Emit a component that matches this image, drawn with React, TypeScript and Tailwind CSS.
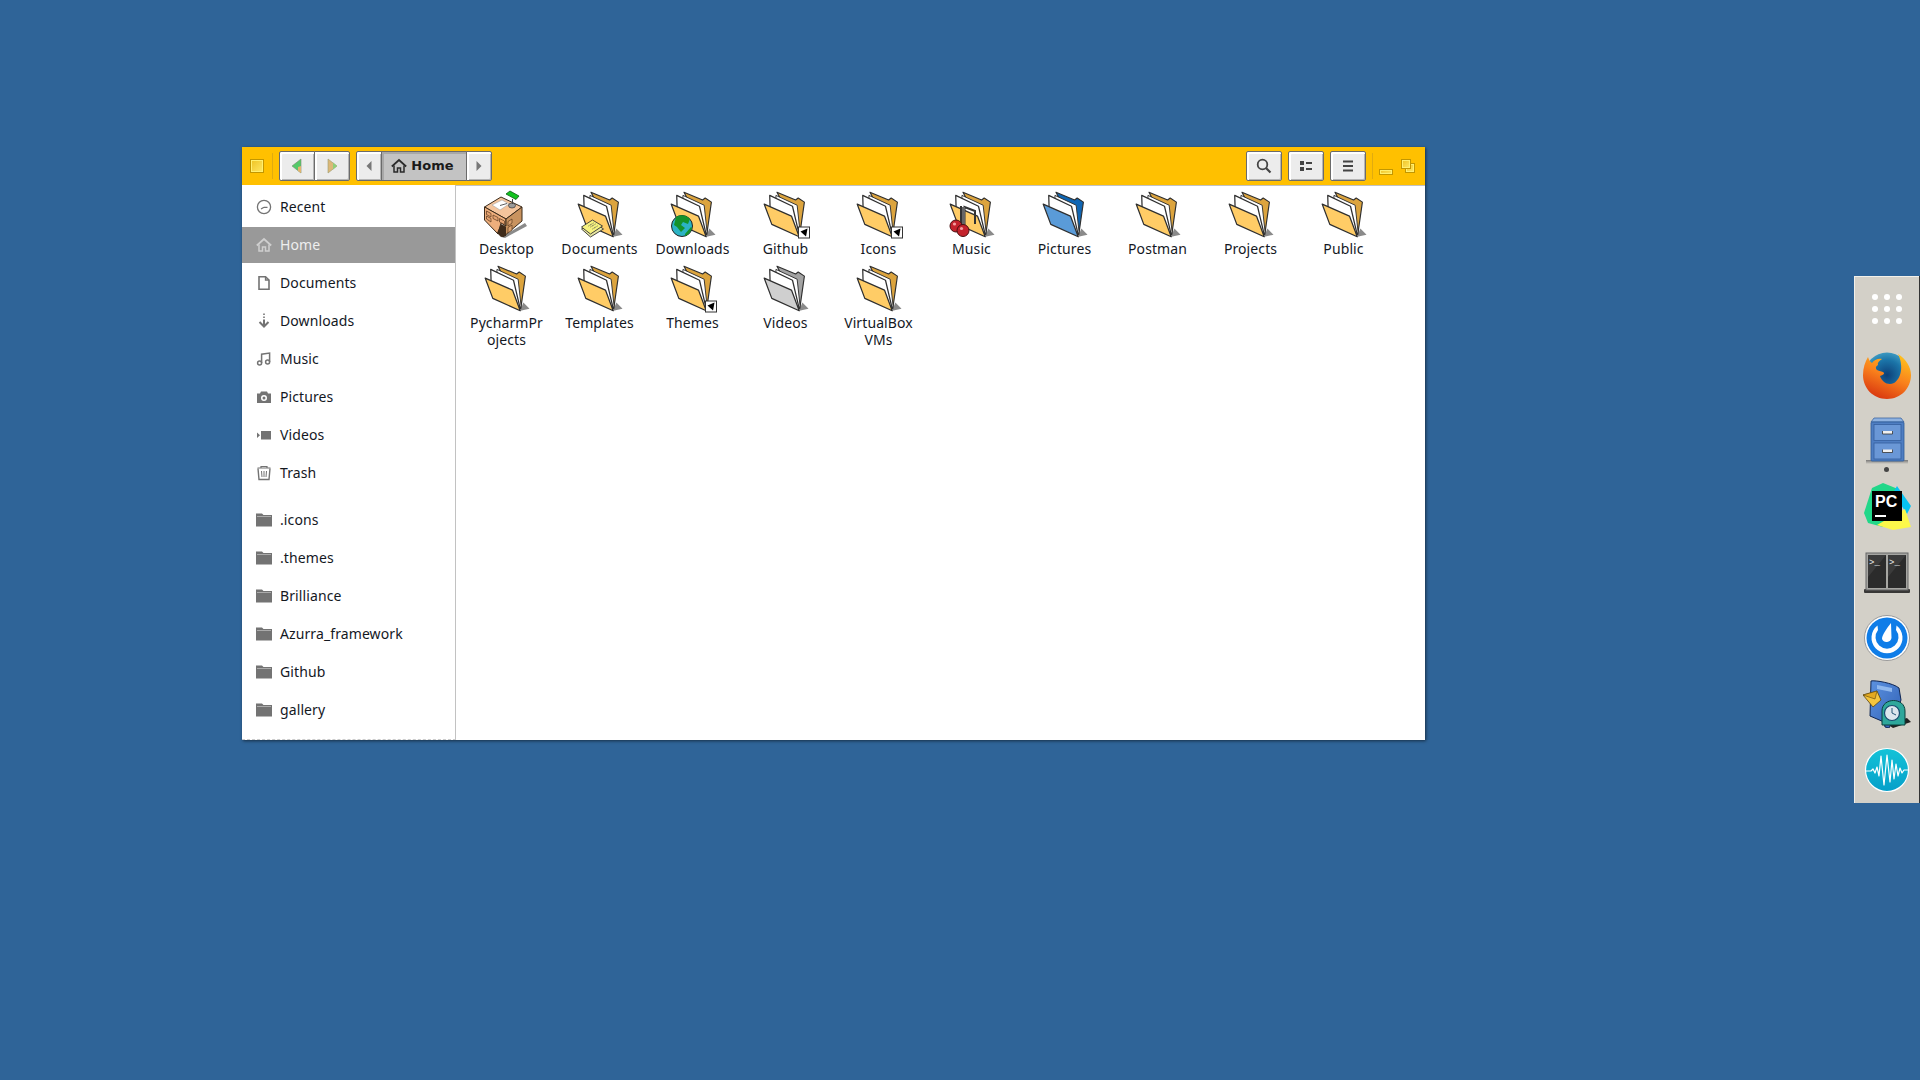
import React from "react";

const Ic = ({ children }: { children: React.ReactNode }) => (
  <svg width="16" height="16" viewBox="0 0 16 16" className="shrink-0">{children}</svg>
);

function SideIcon({ name, color }: { name: string; color: string }) {
  const s = { stroke: color, fill: "none", strokeWidth: 1.3 };
  switch (name) {
    case "recent":
      return <Ic><circle cx="8" cy="8" r="6.6" {...s} /><path d="M8 8.3H11.5M8 8.3 5 10" {...s} /></Ic>;
    case "home":
      return <Ic><path d="M.8 8.5 8 2l7.2 6.5" {...s} strokeWidth={1.7} /><path d="M3 7.5V14H6.5V10H9.5V14H13V7.5" {...s} strokeWidth={1.5} /></Ic>;
    case "doc":
      return <Ic><path d="M3 1.7H9.5L13 5V14.3H3Z" {...s} strokeWidth={1.6} /><path d="M9.5 1.7V5H13" {...s} /></Ic>;
    case "down":
      return <Ic><path d="M8 .5v1.5M8 3.5V5" {...s} strokeWidth={1.6} /><path d="M8 6.5V13M3.5 9 8 13.5 12.5 9" {...s} strokeWidth={2} /></Ic>;
    case "music":
      return <Ic><path d="M5.6 12V3.2L13.6 2V11" {...s} strokeWidth={1.5} /><circle cx="3.6" cy="12" r="2" {...s} strokeWidth={1.5} /><circle cx="11.6" cy="11" r="2" {...s} strokeWidth={1.5} /></Ic>;
    case "pic":
      return <Ic><path fillRule="evenodd" fill={color} d="M5 2.5H11L12 4.5H15V14H1V4.5H4ZM8 6A3 3 0 1 0 8 12 3 3 0 1 0 8 6ZM8 7.5A1.5 1.5 0 1 1 8 10.5 1.5 1.5 0 1 1 8 7.5Z" /></Ic>;
    case "video":
      return <Ic><path fill={color} d="M5 4H15V12.5H5ZM1 5.5 4 8.2 1 11Z" /></Ic>;
    case "trash":
      return <Ic><path d="M1.5 3H14.5M5 3V1.5H11V3" {...s} strokeWidth={1.2} /><path d="M2 3.5 3 14.5H13L14 3.5" {...s} strokeWidth={1.4} /><path d="M5.5 6 6 12M8 6V12M10.5 6 10 12" {...s} strokeWidth={1} /></Ic>;
    default:
      return <Ic><path fill={color} d="M0 1.5H6L7.5 3H16V14.5H0Z" /><path fill="#fff" opacity=".5" d="M1 4.2H15V5H1Z" /></Ic>;
  }
}

const sidebarTop = [
  ["Recent", "recent"], ["Home", "home"], ["Documents", "doc"], ["Downloads", "down"],
  ["Music", "music"], ["Pictures", "pic"], ["Videos", "video"], ["Trash", "trash"],
];
const sidebarBottom = [".icons", ".themes", "Brilliance", "Azurra_framework", "Github", "gallery"];

function SideRow({ label, icon, active }: { label: string; icon: string; active?: boolean }) {
  return (
    <div className={`flex h-[36px] items-center gap-[8px] pl-[14px] ${active ? "bg-[#999999] text-[#eeeeee]" : "text-[#14181f]"}`}>
      <SideIcon name={icon} color={active ? "#cfcfcf" : "#737373"} />
      <span className="pb-[2px]">{label}</span>
    </div>
  );
}

function Folder({
  front = "#ffcc66", back = "#dca43e", emblem,
}: { front?: string; back?: string; emblem?: React.ReactNode }) {
  return (
    <svg width="48" height="48" viewBox="0 0 48 48" className="shrink-0 overflow-visible">
      <g transform="translate(1 0.2) scale(1.035)">
        <path d="M35 45 44 43 38 37Z" fill="#8a8a8a" />
        <path d="M13.5 2 31.5 9.5 34 7.5 40 11.5 35.5 43Z" fill={back} stroke="#2f2f2f" strokeWidth="1.1" strokeLinejoin="round" />
        <path d="M12.5 5 33 14.5 36 42 12.5 22Z" fill="#fff" stroke="#2f2f2f" strokeWidth=".9" strokeLinejoin="round" />
        <path d="M6.5 5 28.5 15.5 35 43 7 22Z" fill="#fff" stroke="#2f2f2f" strokeWidth="1.2" strokeLinejoin="round" />
        <path d="M1.2 13.5 27.5 25 35 45 8.5 33Z" fill={front} stroke="#2f2f2f" strokeWidth="1.2" strokeLinejoin="round" />
      </g>
      {emblem}
    </svg>
  );
}

const Link = () => (
  <g>
    <rect x="36.5" y="37" width="11" height="11" fill="#fff" stroke="#333" />
    <path d="M38.5 41.5 45.5 38.5 44 46.5Z" fill="#000" />
  </g>
);

const DeskIcon = () => (
  <svg width="48" height="48" viewBox="0 0 48 48" className="shrink-0">
    <path d="M18 47 42 33 44 36 22 48Z" fill="#8a8a8a" />
    <path d="M1.5 17 18 7 39 17 23 29Z" fill="#f4c49c" stroke="#3a2a1a" />
    <path d="M1.5 17 23 29V36L18 33 15 44 1.5 30Z" fill="#eeae7c" stroke="#3a2a1a" />
    <path d="M23 29 39 17V31L20 47 18 44V36L23 36Z" fill="#c9935f" stroke="#3a2a1a" />
    <path d="M18 34 23 37 23 46 18 47 14 43Z" fill="#3f2b1a" />
    <path d="M3.5 21 8 23.5V27L3.5 24.5ZM3.5 26 8 28.5V32L3.5 29ZM10 25 15 27.5V31L10 28.5ZM16.5 28.5 21.5 31V34.5L16.5 32Z" fill="#e6a472" stroke="#5a3a20" strokeWidth=".7" />
    <path d="M25 31.5 29 29V33L25 36ZM25 37.5 29 35V40L25 43Z" fill="#dca26f" stroke="#5a3a20" strokeWidth=".7" />
    <path d="M9 15 19 10 26 14 17 20Z" fill="#fff" stroke="#999" strokeWidth=".5" />
    <path d="M17 15.5 24 13.5" stroke="#333" strokeWidth=".8" />
    <ellipse cx="29" cy="15.5" rx="3.5" ry="2.5" fill="#9b9b9b" stroke="#333" strokeWidth=".7" />
    <path d="M29.5 14V9" stroke="#444" strokeWidth="1" />
    <path d="M23 4 27 1 36 6 33 9.5Z" fill="#12c31e" stroke="#0a5a10" strokeWidth=".8" />
  </svg>
);

const DocEmblem = () => (
  <g transform="translate(3.5 4)">
    <path d="M2 35 14 28 24 35 11 43Z" fill="#e8e6a0" stroke="#333" strokeWidth=".9" />
    <path d="M2 33 13 26 23 32 11 40Z" fill="#f6f27e" stroke="#333" strokeWidth=".9" />
    <path d="M9 32 14 29M11 33 16 30M13 35 18 32" stroke="#555" strokeWidth="1" strokeDasharray="1 .7" />
  </g>
);
const GlobeEmblem = () => (
  <g transform="translate(2 0)">
    <circle cx="11" cy="36" r="10.5" fill="#2bb3c4" stroke="#222" />
    <path d="M5 27C9 24 16 25 19 29L17 34 12 32 10 35 14 38 10 42 6 37 3 35Z" fill="#14922a" />
    <path d="M14 44 20 37 21 38C20 42 17 45 14 46Z" fill="#14922a" />
  </g>
);
const MusicEmblem = () => (
  <g transform="translate(1 1)">
    <path d="M12 36V15M15.5 37V16L26 20V33" stroke="#333" fill="none" strokeWidth="2" />
    <path d="M13 16h3v18h-3z" fill="#666" />
    <circle cx="7" cy="35" r="6" fill="#c4232c" stroke="#4a1010" />
    <circle cx="14" cy="39.5" r="6" fill="#c4232c" stroke="#4a1010" />
    <circle cx="5.5" cy="33" r="1.6" fill="#f3a0a0" />
    <circle cx="12.5" cy="37.5" r="1.6" fill="#f3a0a0" />
  </g>
);

const items: { label: React.ReactNode; icon: React.ReactNode }[] = [
  { label: "Desktop", icon: <DeskIcon /> },
  { label: "Documents", icon: <Folder emblem={<DocEmblem />} /> },
  { label: "Downloads", icon: <Folder emblem={<GlobeEmblem />} /> },
  { label: "Github", icon: <Folder emblem={<Link />} /> },
  { label: "Icons", icon: <Folder emblem={<Link />} /> },
  { label: "Music", icon: <Folder emblem={<MusicEmblem />} /> },
  { label: "Pictures", icon: <Folder front="#5a9bd8" back="#0f66b4" /> },
  { label: "Postman", icon: <Folder /> },
  { label: "Projects", icon: <Folder /> },
  { label: "Public", icon: <Folder /> },
  { label: <>PycharmPr<br />ojects</>, icon: <Folder /> },
  { label: "Templates", icon: <Folder /> },
  { label: "Themes", icon: <Folder emblem={<Link />} /> },
  { label: "Videos", icon: <Folder front="#cfcfcf" back="#a3a3a3" /> },
  { label: <>VirtualBox<br />VMs</>, icon: <Folder /> },
];

const btn = "flex items-center justify-center border border-[#6b6b6b] bg-[#ececec] shadow-[inset_2px_2px_0_#ffffff,inset_-1px_-1px_0_#b5b5b5]";

const Tri = ({ dir, fill, fill2 }: { dir: "l" | "r"; fill: string; fill2?: string }) => (
  <svg width="14" height="16" viewBox="0 0 14 16">
    {dir === "l"
      ? <><path d="M11 1V15L2 8Z" fill={fill} stroke="#7a8a70" strokeWidth=".6" />{fill2 && <path d="M8 9V13L11 15V8Z" fill={fill2} />}</>
      : <><path d="M3 1V15L12 8Z" fill={fill} stroke="#9a9a70" strokeWidth=".6" />{fill2 && <path d="M8 4.5V11.5L12 8Z" fill={fill2} />}</>}
  </svg>
);
const SmallTri = ({ dir }: { dir: "l" | "r" }) => (
  <svg width="8" height="12" viewBox="0 0 8 12">
    <path d={dir === "l" ? "M6.5 1V11L1.5 6Z" : "M1.5 1V11L6.5 6Z"} fill="#777" />
  </svg>
);

const YellowSquare = ({ className = "" }: { className?: string }) => (
  <span className={`block border border-[#c29600] bg-gradient-to-br from-[#eec21a] to-[#ffe860] shadow-[inset_1px_1px_0_#ffef70,inset_-1px_-1px_0_#ffef70] ${className}`} />
);

function Header() {
  return (
    <div className="flex h-[38px] items-center bg-[#ffc000] text-[#222]">
      <YellowSquare className="ml-[8px] h-[14px] w-[14px]" />
      <span className="ml-[8px] mr-[6px] h-[26px] w-px bg-[#e0ab10]" />
      <div className="flex h-[30px] w-[71px] rounded-[2px]">
        <div className={`${btn} w-[36px] rounded-l-[2px]`}><Tri dir="l" fill="#55c96a" fill2="#e3b56e" /></div>
        <div className={`${btn} -ml-px w-[36px] rounded-r-[2px]`}><Tri dir="r" fill="#dcb878" fill2="#8fcf7a" /></div>
      </div>
      <div className="ml-[6px] flex h-[30px]">
        <div className={`${btn} w-[26px] rounded-l-[2px]`}><SmallTri dir="l" /></div>
        <div className="-ml-px flex w-[86px] items-center justify-center gap-[4px] border border-[#6b6b6b] bg-[#c3c3c3] pr-[3px] shadow-[inset_2px_2px_0_#a8a8a8]">
          <SideIcon name="home" color="#2a2a2a" />
          <span className="font-['DejaVu_Sans',sans-serif] text-[13px] font-bold text-[#1a1a1a]">Home</span>
        </div>
        <div className={`${btn} -ml-px w-[26px] rounded-r-[2px]`}><SmallTri dir="r" /></div>
      </div>
      <div className="flex-1" />
      <div className="flex gap-[6px]">
        <div className={`${btn} h-[30px] w-[36px] rounded-[2px]`}>
          <svg width="16" height="16" viewBox="0 0 16 16"><circle cx="6.5" cy="6.5" r="4.8" fill="none" stroke="#444" strokeWidth="1.8" /><path d="M10 10 14.5 14.5" stroke="#444" strokeWidth="2.2" /></svg>
        </div>
        <div className={`${btn} h-[30px] w-[36px] rounded-[2px]`}>
          <svg width="14" height="14" viewBox="0 0 14 14"><path fill="#444" d="M1 2H5V6H1ZM7 3H13V5H7ZM1 8H5V12H1ZM7 9H13V11H7Z" /></svg>
        </div>
        <div className={`${btn} h-[30px] w-[36px] rounded-[2px]`}>
          <svg width="14" height="14" viewBox="0 0 14 14"><path fill="#444" d="M2 1.5H12V3.5H2ZM2 6H12V8H2ZM2 10.5H12V12.5H2Z" /></svg>
        </div>
      </div>
      <span className="ml-[6px] h-[26px] w-px bg-[#e0ab10]" />
      <YellowSquare className="ml-[6px] mt-[12px] h-[6px] w-[14px]" />
      <div className="relative ml-[8px] h-[14px] w-[14px]">
        <YellowSquare className="absolute bottom-0 right-0 h-[10px] w-[10px]" />
        <YellowSquare className="absolute left-0 top-0 h-[10px] w-[10px]" />
      </div>
      <span className="w-[10px]" />
    </div>
  );
}

function Firefox() {
  return (
    <svg width="48" height="48" viewBox="0 0 48 48">
      <defs>
        <radialGradient id="ffb" cx="50%" cy="50%" r="55%"><stop offset="0" stopColor="#0d3f78" /><stop offset=".6" stopColor="#1b74a8" /><stop offset="1" stopColor="#46a4c8" /></radialGradient>
        <linearGradient id="ffo" x1="0.75" y1="0" x2="0.3" y2="1"><stop offset="0" stopColor="#ffc21e" /><stop offset=".5" stopColor="#f9801c" /><stop offset="1" stopColor="#d8350f" /></linearGradient>
      </defs>
      <circle cx="24" cy="24" r="22.5" fill="url(#ffb)" />
      <path fill="url(#ffo)" d="M24 48C10 48 0 37 0 24 0 17 2 11 5 6 6 9 7 11 9 12 11 9 15 7 19 8 16 10 14 12 15 14 13 15 12 17 14 19 15 20 18 20 20 21 22 22 21 24 17 25 19 31 25 35 31 32 38 28 41 15 35 3 43 8 48 16 48 24 48 37 38 48 24 48Z" />
    </svg>
  );
}

function Cabinet() {
  return (
    <svg width="48" height="48" viewBox="0 0 48 48">
      <defs><linearGradient id="cs" x1="0" y1="0" x2="0" y2="1"><stop offset="0" stopColor="#777" /><stop offset="1" stopColor="#d3d0c8" /></linearGradient></defs>
      <rect x="3" y="43" width="42" height="4" fill="url(#cs)" />
      <path d="M11 1H38L41 5H8Z" fill="#8fb2e0" stroke="#2f5a98" strokeWidth=".7" />
      <rect x="8" y="5" width="33" height="39" rx="1" fill="#4f7ec2" stroke="#2f5a98" strokeWidth=".8" />
      <rect x="11" y="7.5" width="27" height="16" fill="#6a97d6" stroke="#355f9e" strokeWidth=".8" />
      <rect x="11" y="26" width="27" height="16" fill="#6a97d6" stroke="#355f9e" strokeWidth=".8" />
      <path d="M19.5 14V17H29.5V14M19.5 32.5V35.5H29.5V32.5" fill="#f0f0f0" stroke="#333" strokeWidth=".8" />
    </svg>
  );
}

function PyCharm() {
  return (
    <svg width="48" height="48" viewBox="0 0 48 48" className="font-['Liberation_Sans',sans-serif]">
      <path d="M1 30 9 5 20 0 35 6 36 30 20 44 5 40Z" fill="#21d789" />
      <path d="M34 3 48 23 44 31 30 10Z" fill="#07c3f2" />
      <path d="M14 42 42 26 48 44 30 47Z" fill="#fcf84a" />
      <rect x="9" y="8" width="30" height="30" fill="#000" />
      <text x="12" y="24" fontSize="16" fontWeight="700" fill="#fff">PC</text>
      <rect x="12" y="32" width="11" height="2" fill="#fff" />
    </svg>
  );
}

function Terminal() {
  return (
    <svg width="48" height="48" viewBox="0 0 48 48" className="font-['Liberation_Mono',monospace]">
      <rect x="1" y="41" width="46" height="4" rx="1" fill="#1c1c1c" opacity=".85" />
      <rect x="3" y="5" width="42" height="37" fill="#a6a6a2" stroke="#666" />
      <rect x="5" y="7" width="18" height="33" fill="#2b2b2b" />
      <rect x="25" y="7" width="18" height="33" fill="#2b2b2b" />
      <path d="M5 7H23L5 29ZM25 7H43L25 29Z" fill="#fff" opacity=".08" />
      <text x="6" y="17" fontSize="9" fill="#eee">&gt;_</text>
      <text x="26" y="17" fontSize="9" fill="#eee">&gt;_</text>
    </svg>
  );
}

function Mattermost() {
  return (
    <svg width="48" height="48" viewBox="0 0 48 48">
      <circle cx="24" cy="24" r="22.5" fill="#fff" stroke="#9a9a9a" />
      <circle cx="24" cy="24" r="20.5" fill="#0f7de8" />
      <path d="M14.5 11.5A15.5 15.5 0 1 0 33.5 11.5L33 16A11.5 11.5 0 1 1 15 16Z" fill="#fff" />
      <path d="M28 9 28.5 24A5 5 0 0 1 19 25C19 21 24 14 28 9Z" fill="#fff" />
    </svg>
  );
}

function MailClock() {
  return (
    <svg width="48" height="48" viewBox="0 0 48 48">
      <defs><linearGradient id="mb" x1="0" y1="0" x2="1" y2="1"><stop offset="0" stopColor="#5c92e0" /><stop offset="1" stopColor="#2f5fb4" /></linearGradient></defs>
      <path d="M24 44 44 38 48 42 30 48Z" fill="#222" />
      <path d="M8 1C12 0 30 3 36 8L38 20 30 40 26 48 22 47 21 42 7 36Z" fill="url(#mb)" stroke="#0e2552" strokeWidth="1" />
      <path d="M14 5 29 8 29 12 14 9Z" fill="#8fb8ee" />
      <path d="M0 15 14 11 18 20 10 27Z" fill="#f4c53e" stroke="#5a4410" strokeWidth=".8" />
      <path d="M0 15 12 19 14 11Z" fill="#e3a920" stroke="#5a4410" strokeWidth=".6" />
      <path d="M19 45V31C19 17 42 17 42 31V45Z" fill="#2ea79b" stroke="#0b3f3a" strokeWidth="1" />
      <circle cx="29" cy="33" r="7.5" fill="#dbe6ee" stroke="#174a70" strokeWidth="1.2" />
      <path d="M29 33V28M29 33 33 35" stroke="#225577" strokeWidth="1" />
    </svg>
  );
}

function Wave() {
  return (
    <svg width="48" height="48" viewBox="0 0 48 48">
      <defs><linearGradient id="wg" x1="0" y1="0" x2="0" y2="1"><stop offset="0" stopColor="#14c3d8" /><stop offset="1" stopColor="#059fc9" /></linearGradient></defs>
      <circle cx="24" cy="24" r="21.5" fill="url(#wg)" stroke="#fff" strokeWidth="1.2" />
      <path d="M3 25H8L10 23 12 27 14 21 16 30 18 10 21 39 24 9 27 36 29 14 31 33 33 18 35 30 37 22 39 27 41 24H45" fill="none" stroke="#fff" strokeWidth="1.2" strokeLinejoin="round" />
    </svg>
  );
}

function AppsGrid() {
  return (
    <div className="grid grid-cols-3 gap-[6px]">
      {Array.from({ length: 9 }).map((_, i) => (
        <span key={i} className="h-[6px] w-[6px] rounded-full bg-white" />
      ))}
    </div>
  );
}

const DockSlot = ({ children }: { children: React.ReactNode }) => (
  <div className="relative flex h-[66px] w-full items-center justify-center">{children}</div>
);

export default function App() {
  return (
    <div className="relative h-screen w-full overflow-hidden bg-[#2f6498] font-['Noto_Sans',sans-serif] text-[14px] tracking-[0.1px]">
      <div className="absolute left-[242px] top-[147px] flex h-[593px] w-[1183px] flex-col bg-white shadow-[1px_1px_3px_rgba(0,0,0,0.55)]">
        <Header />
        <div className="flex min-h-0 flex-1">
          <div className="flex w-[214px] flex-col gap-[2px] border-b border-r border-dashed border-b-[#cccccc] border-r-[#c2c2c2] pt-[4px] [border-right-style:solid]">
            {sidebarTop.map(([l, i]) => <SideRow key={l} label={l} icon={i} active={l === "Home"} />)}
            <div className="h-[7px]" />
            {sidebarBottom.map((l) => <SideRow key={l} label={l} icon="folder" />)}
          </div>
          <div className="grid flex-1 auto-rows-[74px] grid-cols-[repeat(10,93px)] content-start border-t border-t-[#c2c2c2] pl-[4px] pt-[4px]">
            {items.map((it, i) => (
              <div key={i} className="flex flex-col items-center text-center leading-[17px] text-[#14181f]">
                {it.icon}
                <span className="mt-[2px]">{it.label}</span>
              </div>
            ))}
          </div>
        </div>
      </div>

      <div className="absolute right-0 top-[276px] flex h-[527px] w-[66px] flex-col border-r border-r-[#333] bg-[#d3d0c8] shadow-[inset_1px_1px_0_#f2f0ea]">
        <DockSlot><AppsGrid /></DockSlot>
        <DockSlot><Firefox /></DockSlot>
        <DockSlot>
          <Cabinet />
          <span className="absolute bottom-[2px] h-[5px] w-[5px] rounded-full bg-[#444]" />
        </DockSlot>
        <DockSlot><PyCharm /></DockSlot>
        <DockSlot><Terminal /></DockSlot>
        <DockSlot><Mattermost /></DockSlot>
        <DockSlot><MailClock /></DockSlot>
        <DockSlot><Wave /></DockSlot>
      </div>
    </div>
  );
}
